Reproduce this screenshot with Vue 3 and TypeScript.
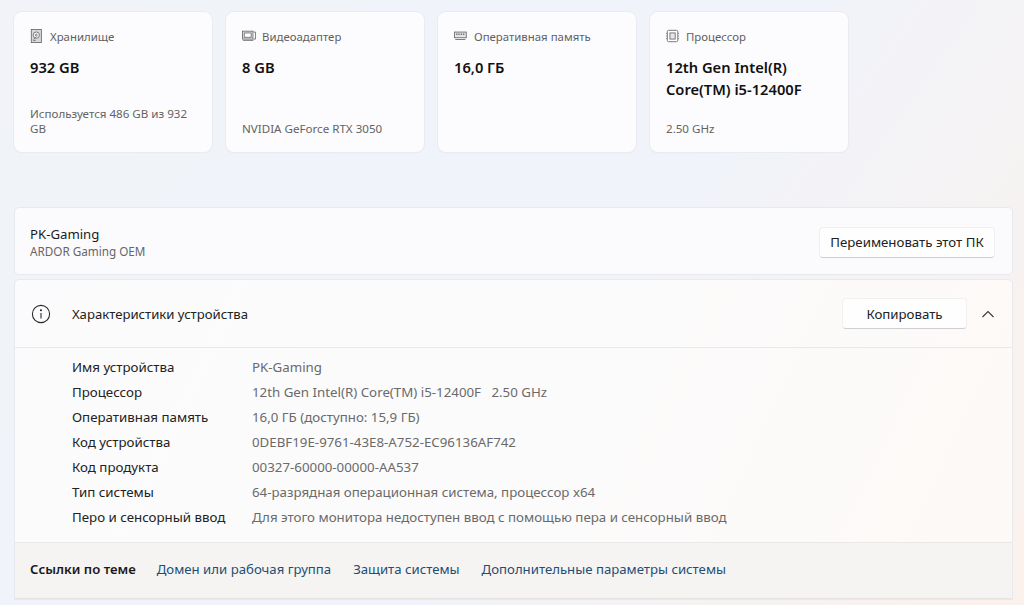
<template>
  <div class="page">
    <section class="cards">
      <article v-for="card in cards" :key="card.label" class="card">
        <div class="card-head">
          <svg class="card-icon" viewBox="0 0 16 16" fill="none" stroke="#6b6b6b" stroke-width="1">
            <template v-if="card.icon === 'disk'">
              <rect x="1.5" y="0.5" width="11.5" height="15" fill="#d8d8d8" />
              <circle cx="7.2" cy="7" r="3.6" fill="#f4f4f4" />
              <circle cx="7.2" cy="7" r="1" />
              <path d="M3.5 13h3M7.2 9l-3 3" />
            </template>
            <template v-else-if="card.icon === 'gpu'">
              <rect x="0.5" y="2.5" width="12" height="9" fill="#ececec" />
              <rect x="2.5" y="4.5" width="8" height="5" fill="#fff" />
              <path d="M13 3.5h2.5v8H13M1 13h12" />
            </template>
            <template v-else-if="card.icon === 'ram'">
              <rect x="0.5" y="3.5" width="13.5" height="6.5" fill="#e4e4e4" />
              <path d="M2.5 6h1.5M5 6h1.5M7.7 6h1.5M10.3 6h1.5" stroke-width="1.6" />
              <path d="M1.5 12h11.5" />
            </template>
            <template v-else>
              <rect x="1.5" y="1.5" width="12" height="13" rx="1.5" />
              <rect x="4.5" y="4.5" width="6" height="7" fill="#e8e8e8" />
              <path d="M0 5h1.5M0 8h1.5M0 11h1.5M13.5 5H15M13.5 8H15M13.5 11H15" stroke-width="0.8" />
            </template>
          </svg>
          <span class="card-label">{{ card.label }}</span>
        </div>
        <div class="card-value">{{ card.value }}</div>
        <div class="card-note">{{ card.note }}</div>
      </article>
    </section>

    <section class="pc-panel">
      <div>
        <div class="pc-name">PK-Gaming</div>
        <div class="pc-model">ARDOR Gaming OEM</div>
      </div>
      <button class="btn btn--rename">Переименовать этот ПК</button>
    </section>

    <section class="spec-panel">
      <header class="spec-head">
        <svg class="info-icon" viewBox="0 0 20 20" fill="none" stroke="#2b2b2b" stroke-width="1.1">
          <circle cx="10" cy="10" r="8.6" />
          <path d="M10 9v5.4" />
          <circle cx="10" cy="6.3" r="0.5" fill="#2b2b2b" />
        </svg>
        <h2 class="spec-title">Характеристики устройства</h2>
        <button class="btn btn--copy">Копировать</button>
        <svg class="chevron" viewBox="0 0 14 8" fill="none" stroke="#3a3a3a" stroke-width="1.1">
          <path d="M1.5 7L7 1.5 12.5 7" />
        </svg>
      </header>
      <dl class="spec-list">
        <div v-for="row in specs" :key="row.name" class="spec-row">
          <dt>{{ row.name }}</dt>
          <dd>{{ row.value }}</dd>
        </div>
      </dl>
      <footer class="links">
        <span class="links-title">Ссылки по теме</span>
        <a v-for="link in links" :key="link" class="link">{{ link }}</a>
      </footer>
    </section>
  </div>
</template>

<script setup lang="ts">
const cards = [
  { icon: 'disk', label: 'Хранилище', value: '932 GB', note: 'Используется 486 GB из 932 GB' },
  { icon: 'gpu', label: 'Видеоадаптер', value: '8 GB', note: 'NVIDIA GeForce RTX 3050' },
  { icon: 'ram', label: 'Оперативная память', value: '16,0 ГБ', note: '' },
  { icon: 'cpu', label: 'Процессор', value: '12th Gen Intel(R) Core(TM) i5-12400F', note: '2.50 GHz' },
];

const specs = [
  { name: 'Имя устройства', value: 'PK-Gaming' },
  { name: 'Процессор', value: '12th Gen Intel(R) Core(TM) i5-12400F   2.50 GHz' },
  { name: 'Оперативная память', value: '16,0 ГБ (доступно: 15,9 ГБ)' },
  { name: 'Код устройства', value: '0DEBF19E-9761-43E8-A752-EC96136AF742' },
  { name: 'Код продукта', value: '00327-60000-00000-AA537' },
  { name: 'Тип системы', value: '64-разрядная операционная система, процессор x64' },
  { name: 'Перо и сенсорный ввод', value: 'Для этого монитора недоступен ввод с помощью пера и сенсорный ввод' },
];

const links = ['Домен или рабочая группа', 'Защита системы', 'Дополнительные параметры системы'];
</script>

<style>
html, body {
  margin: 0;
  height: 100%;
  overflow: hidden;
}
</style>

<style scoped>
.page {
  box-sizing: border-box;
  width: 1024px;
  height: 605px;
  padding: 12px 11px 0 14px;
  overflow: hidden;
  font-family: 'Noto Sans', 'Open Sans', sans-serif;
  color: #1b1b1b;
  background: linear-gradient(125deg, #f1f3f8 0%, #f0f3fa 55%, #f6f2f2 80%, #fbf1ec 100%);
}

.cards {
  display: flex;
  gap: 14px;
}
.card {
  box-sizing: border-box;
  width: 198px;
  height: 140px;
  padding: 15px 16px 16px;
  display: flex;
  flex-direction: column;
  background: #fcfcfe;
  border-radius: 8px;
  box-shadow: 0 0 0 1px #e9ebf0, 0 1px 1px #e2e4e9;
}
.card-head {
  display: flex;
  align-items: center;
  gap: 6px;
  height: 18px;
}
.card-icon {
  width: 14px;
  height: 14px;
  flex: none;
}
.card-label {
  font-size: 11.4px;
  color: #5f5f5f;
}
.card-value {
  margin-top: 11px;
  font-size: 14.7px;
  font-weight: 600;
  line-height: 22px;
  color: #111;
}
.card-note {
  margin-top: auto;
  font-size: 11.6px;
  line-height: 15px;
  color: #636363;
}

.pc-panel {
  box-sizing: border-box;
  height: 68px;
  margin-top: 55px;
  padding: 2px 17px 0 15px;
  display: flex;
  align-items: center;
  justify-content: space-between;
  background: #fbfbfd;
  border: 1px solid #e8e9ee;
  border-radius: 5px;
}
.pc-name {
  font-size: 13.2px;
  line-height: 18px;
}
.pc-model {
  font-size: 11.7px;
  line-height: 16px;
  color: #666;
}

.btn {
  font: inherit;
  font-size: 13.25px;
  color: #222;
  background: #fefefe;
  border: 1px solid #f0f0f0;
  border-bottom-color: #cfcfcf;
  border-radius: 4px;
  padding: 0;
}
.btn--rename {
  width: 176px;
  height: 31px;
}
.btn--copy {
  width: 125px;
  height: 31px;
  margin-left: auto;
}

.spec-panel {
  margin-top: 4px;
  height: 321px;
  display: flex;
  flex-direction: column;
  background: linear-gradient(115deg, #fbfbfd 0%, #fcfbfb 60%, #fdf9f6 100%);
  border: 1px solid #e8e9ee;
  border-radius: 5px 5px 0 0;
  box-sizing: border-box;
}
.spec-head {
  flex: none;
  height: 68px;
  padding: 0 17px 0 16px;
  display: flex;
  align-items: center;
  border-bottom: 1px solid #e8e8ea;
  box-sizing: border-box;
}
.info-icon {
  width: 20px;
  height: 20px;
  flex: none;
}
.spec-title {
  margin: 0 0 0 21px;
  font-size: 13.15px;
  font-weight: 400;
  color: #222;
}
.chevron {
  width: 14px;
  height: 8px;
  margin-left: 14px;
  flex: none;
}

.spec-list {
  margin: 0;
  padding: 6px 0 0 57px;
  flex: 1;
}
.spec-row {
  display: flex;
  height: 25px;
  align-items: center;
  font-size: 13.3px;
}
.spec-row dt {
  width: 180px;
  flex: none;
  color: #222;
}
.spec-row dd {
  margin: 0;
  color: #6a6a6a;
  white-space: pre;
}

.links {
  flex: none;
  height: 57px;
  padding: 0 0 4px 15px;
  display: flex;
  align-items: center;
  box-sizing: border-box;
  background: #f6f4f3;
  border-top: 1px solid #ebe9e8;
  border-bottom: 1px solid #e6e4e2;
  font-size: 13.2px;
}
.links-title {
  font-weight: 600;
  color: #1a1a1a;
  margin-right: 21px;
}
.link {
  color: #1d4e74;
  margin-right: 22px;
}
</style>
